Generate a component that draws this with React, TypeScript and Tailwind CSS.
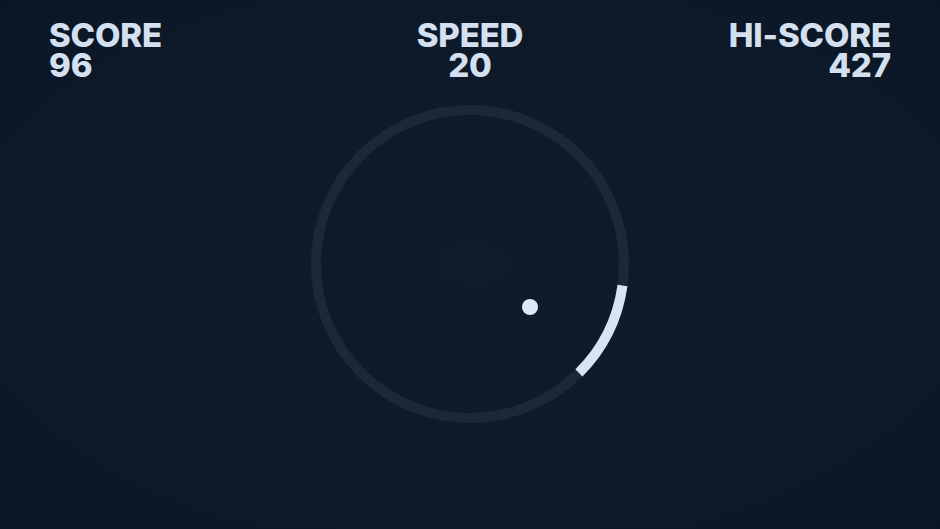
import React from 'react';

type StatProps = {
  label: string;
  value: number;
  align: 'left' | 'center' | 'right';
};

function Stat({ label, value, align }: StatProps) {
  const alignClass =
    align === 'left' ? 'text-left' : align === 'center' ? 'text-center' : 'text-right';
  return (
    <div className={`${alignClass} text-[33px] leading-[30px] font-extrabold tracking-[-0.005em] text-[#d4e0f0]`}>
      <p>{label}</p>
      <p>{value}</p>
    </div>
  );
}

export default function App() {
  // paddle arc, degrees clockwise from 3 o'clock
  const cx = 165;
  const cy = 165;
  const r = 154;
  const start = (8 * Math.PI) / 180;
  const end = (45 * Math.PI) / 180;
  const x1 = cx + r * Math.cos(start);
  const y1 = cy + r * Math.sin(start);
  const x2 = cx + r * Math.cos(end);
  const y2 = cy + r * Math.sin(end);

  return (
    <div
      className="w-full h-[529px] overflow-hidden bg-[radial-gradient(ellipse_at_center,#0f1b2b_0%,#0e1a2a_55%,#0b1625_100%)]"
      style={{ fontFamily: 'Inter, "Noto Sans", sans-serif' }}
    >
      {/* HUD */}
      <div className="flex items-start justify-between px-[49px] pt-[20px]">
        <div className="w-[200px]">
          <Stat label="SCORE" value={96} align="left" />
        </div>
        <Stat label="SPEED" value={20} align="center" />
        <div className="w-[200px]">
          <Stat label="HI-SCORE" value={427} align="right" />
        </div>
      </div>

      {/* Arena */}
      <div className="mt-[19px] flex justify-center">
        <svg width="330" height="330" viewBox="0 0 330 330">
          <circle cx={cx} cy={cy} r={r} fill="none" stroke="#1c273a" strokeWidth="10" />
          <path
            d={`M ${x1} ${y1} A ${r} ${r} 0 0 1 ${x2} ${y2}`}
            fill="none"
            stroke="#d7e4f4"
            strokeWidth="10"
          />
          <circle cx="225" cy="208" r="8" fill="#dde8f6" />
        </svg>
      </div>
    </div>
  );
}
